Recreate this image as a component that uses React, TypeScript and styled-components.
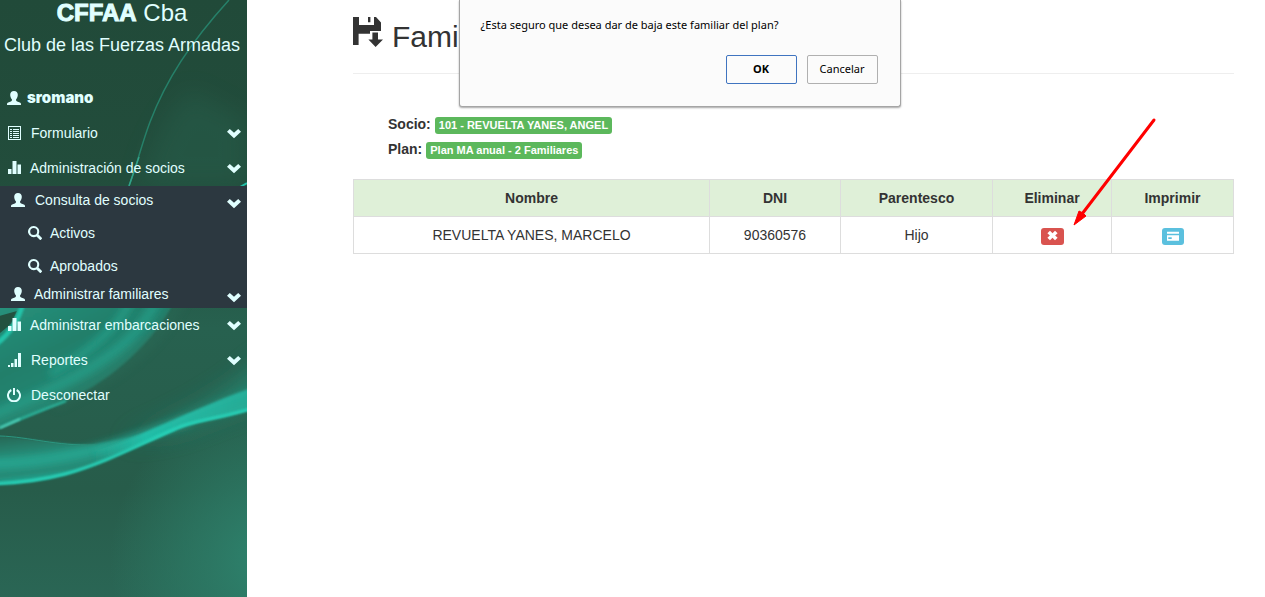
import React from "react";
import styled, { createGlobalStyle } from "styled-components";

const GlobalStyle = createGlobalStyle`
  *, *::before, *::after { box-sizing: border-box; }
  body {
    margin: 0;
    background: #fff;
    color: #333;
    font: 15px/20px "Liberation Sans", Arial, sans-serif;
  }
  h1, h2, p, ul, dl, dd { margin: 0; padding: 0; }
  ul { list-style: none; }
`;

const Page = styled.div`
  position: relative;
  display: flex;
  min-height: 100vh;
  overflow: hidden;
`;

const Sidebar = styled.aside`
  position: relative;
  flex: none;
  width: 247px;
  background: #275f4e;
  color: #e0ffff;
`;

const Backdrop = styled.svg`
  position: absolute;
  inset: 0;
  width: 100%;
  height: 100%;
`;

const SidebarContent = styled.div`
  position: relative;
`;

const Brand = styled.header`
  height: 80px;
  padding-right: 3px;
  text-align: center;
  white-space: nowrap;
`;

const BrandName = styled.h1`
  font-size: 24px;
  line-height: 26px;
  font-weight: 400;

  strong { font-weight: 700; -webkit-text-stroke: 1px currentColor; }
`;

const BrandTag = styled.p`
  padding-top: 6px;
  font-size: 18px;
  line-height: 26px;
`;

const MenuLink = styled.a<{ $height?: number; $indent?: number; $gap?: number; $bold?: boolean }>`
  display: flex;
  align-items: center;
  gap: ${(p) => p.$gap ?? 9}px;
  height: ${(p) => p.$height ?? 35}px;
  padding: 0 6px 0 ${(p) => p.$indent ?? 7}px;
  color: inherit;
  font-family: ${(p) => (p.$bold ? '"Inter", "Arial Black", sans-serif' : "inherit")};
  font-size: ${(p) => (p.$bold ? 15 : 14)}px;
  font-weight: ${(p) => (p.$bold ? 900 : 400)};
  text-decoration: none;
  white-space: nowrap;
`;

const Label = styled.span`
  flex: 1;
`;

const Submenu = styled.ul`
  margin: 1px 0 -1px;
  padding-bottom: 2px;
  background: #2c3840;
`;

const Leaves = styled.ul`
  padding-top: 2px;
`;

const Glyph = styled.svg<{ $size?: number; $drop?: boolean }>`
  flex: none;
  display: block;
  width: ${(p) => p.$size ?? 14}px;
  height: ${(p) => p.$size ?? 14}px;
  margin-top: ${(p) => (p.$drop ? 6 : 0)}px;
  fill: currentColor;
`;

const Main = styled.main`
  position: relative;
  flex: 1;
  min-width: 0;
  padding: 15px 31px 40px 106px;
`;

const TitleBar = styled.header`
  display: flex;
  align-items: flex-start;
  gap: 9px;
  height: 59px;
  padding-top: 2px;
  border-bottom: 1px solid #eee;
`;

const Title = styled.h2`
  font-size: 30px;
  line-height: 34px;
  font-weight: 400;
  padding-top: 3px;
`;

const Summary = styled.dl`
  padding: 37px 0 0 35px;
  margin-bottom: 18px;
`;

const SummaryRow = styled.div`
  display: flex;
  align-items: center;
  gap: 4px;
  height: 25px;

  dt { font-size: 14px; font-weight: 700; }
`;

const Badge = styled.dd`
  && { margin-top: 4px; }
  padding: 0 4px;
  border-radius: 3px;
  background: #5cb85c;
  color: #fff;
  font-size: 11px;
  line-height: 17px;
  font-weight: 700;
`;

const Table = styled.table`
  width: 100%;
  table-layout: fixed;
  border-collapse: collapse;
  font-size: 14px;
  text-align: center;

  th, td {
    height: 37px;
    padding: 0 8px;
    border: 1px solid #ddd;
  }
  th { background: #dff0d8; font-weight: 700; }
`;

const Col = styled.col<{ $width?: number }>`
  width: ${(p) => (p.$width ? `${p.$width}px` : "auto")};
`;

const IconButton = styled.button<{ $tone: "danger" | "info" }>`
  display: flex;
  align-items: center;
  justify-content: center;
  margin: 2px auto 0;
  padding: 0 0 1px;
  width: ${(p) => (p.$tone === "danger" ? 23 : 22)}px;
  height: 17px;
  border: 0;
  border-radius: 3px;
  background: ${(p) => (p.$tone === "danger" ? "#d9534f" : "#5bc0de")};
  color: #fff;
`;

const Arrow = styled.svg`
  position: absolute;
  top: 116px;
  right: 107px;
  width: 86px;
  height: 112px;
  pointer-events: none;
`;

const Dialog = styled.div`
  position: absolute;
  top: 0;
  left: calc(50% - 174px);
  width: 442px;
  height: 107px;
  padding: 16px 22px 0 21px;
  border: 1px solid #a5a5a5;
  border-top: 0;
  border-radius: 0 0 3px 3px;
  background: #fbfbfb;
  box-shadow: 0 1px 2px rgba(0, 0, 0, 0.35);
  color: #000;
  font-family: "Noto Sans", "Segoe UI", sans-serif;
  font-size: 11px;
  line-height: 18px;
  white-space: nowrap;
`;

const DialogActions = styled.div`
  display: flex;
  justify-content: flex-end;
  gap: 10px;
  margin-top: 21px;
`;

const DialogButton = styled.button<{ $primary?: boolean }>`
  width: 71px;
  height: 29px;
  padding: 0 0 2px;
  border: 1px solid ${(p) => (p.$primary ? "#3f74c0" : "#b0b0b0")};
  border-radius: 2px;
  background: #fbfbfb;
  color: #000;
  font: inherit;
  font-weight: ${(p) => (p.$primary ? 700 : 400)};
`;

type GlyphName = "user" | "list" | "stats" | "search" | "signal" | "off" | "chevron" | "remove" | "card" | "floppy";

const glyphs: Record<GlyphName, React.ReactNode> = {
  user: (
    <path d="M7 0C4.600 0 3.200 1.500 3.200 3.800C3.200 5.700 3.900 7.300 4.900 8.300V9.300C4.900 9.800 4.500 10.100 3.800 10.400L1.200 11.500C.4 11.800 0 12.300 0 13V14H14V13C14 12.300 13.600 11.800 12.800 11.500L10.200 10.400C9.500 10.100 9.100 9.800 9.100 9.300V8.300C10.100 7.300 10.800 5.700 10.800 3.800C10.800 1.500 9.400 0 7 0Z" />
  ),
  list: (
    <path
      fillRule="evenodd"
      d="M1 0H14V14H1ZM2 1V13H13V1ZM3 3H5V4H3ZM6 3H12V4H6ZM3 5H5V6H3ZM6 5H12V6H6ZM3 7H5V8H3ZM6 7H12V8H6ZM3 9H5V10H3ZM6 9H12V10H6ZM3 11H5V12H3ZM6 11H12V12H6Z"
    />
  ),
  stats: <path d="M1 8H4.500V13H1ZM5.500 0H9.500V13H5.500ZM10.500 3.500H14V13H10.500Z" />,
  search: (
    <path
      fillRule="evenodd"
      d="M5.700 0A5.600 5.600 0 0 1 10.500 8.400L13.800 11.700A.8.800 0 0 1 13.800 12.800L12.900 13.700A.7.700 0 0 1 11.800 13.700L8.500 10.400A5.600 5.600 0 1 1 5.700 0ZM5.700 2.100A3.500 3.500 0 1 0 5.700 9.100A3.500 3.500 0 0 0 5.700 2.100Z"
    />
  ),
  signal: <path d="M1 12H3V14H1ZM4 10H6.500V14H4ZM7.500 6H10V14H7.500ZM11 0H14V14H11Z" />,
  off: (
    <g fill="none" stroke="currentColor" strokeWidth="2">
      <path d="M4.300 2A6 6 0 1 0 9.700 2" />
      <path d="M7 0V7" />
    </g>
  ),
  chevron: <path d="M2.800 3L7 6.800L11.200 3L14 5.700L7 12.300L0 5.700Z" />,
  remove: <path d="M3.800 1L7 4L10.200 1L13.500 4.100L10.400 7L13.500 9.900L10.200 13L7 10L3.800 13L.5 9.900L3.600 7L.5 4.100Z" />,
  card: (
    <path fillRule="evenodd" d="M0 2H14V4.300H0ZM0 6H14V12.500H0ZM1.500 8.500V10.500H5.500V8.500Z" />
  ),
  floppy: (
    <path
      fillRule="evenodd"
      d="M0 0H3V4H10.500V0H11.500L14 2.700V7H8.500V8.400H2.800V14H0ZM7.500 0H8.700V2.600H7.500ZM9.700 7.800H12.500V11.200H15L11.300 15L7.700 11.200H9.700Z"
    />
  ),
};

function Icon({ name, size, drop, box = 14 }: { name: GlyphName; size?: number; drop?: boolean; box?: number }) {
  return (
    <Glyph viewBox={`0 0 ${box} ${box}`} $size={size} $drop={drop} aria-hidden="true">
      {glyphs[name]}
    </Glyph>
  );
}

function Waves() {
  return (
    <Backdrop viewBox="0 0 247 597" preserveAspectRatio="none" aria-hidden="true">
      <defs>
        <linearGradient id="base" x1="0" y1="0" x2="0" y2="597" gradientUnits="userSpaceOnUse">
          <stop offset="0" stopColor="#214a39" />
          <stop offset="0.300" stopColor="#224d3c" />
          <stop offset="0.550" stopColor="#27614f" />
          <stop offset="0.820" stopColor="#275c4a" />
          <stop offset="1" stopColor="#2a6655" />
        </linearGradient>
        <radialGradient id="side" cx="275" cy="560" r="165" gradientUnits="userSpaceOnUse">
          <stop offset="0" stopColor="#2e8670" />
          <stop offset="0.400" stopColor="#2d7d68" stopOpacity="0.750" />
          <stop offset="1" stopColor="#2c8069" stopOpacity="0" />
        </radialGradient>
        <linearGradient id="sweep" x1="0" y1="300" x2="60" y2="420" gradientUnits="userSpaceOnUse">
          <stop offset="0" stopColor="#26937d" />
          <stop offset="0.500" stopColor="#237f6b" />
          <stop offset="1" stopColor="#278a75" />
        </linearGradient>
        <linearGradient id="lower" x1="20" y1="436" x2="26" y2="486" gradientUnits="userSpaceOnUse">
          <stop offset="0" stopColor="#286b59" />
          <stop offset="0.450" stopColor="#26937e" />
          <stop offset="0.750" stopColor="#258a76" />
          <stop offset="1" stopColor="#23b59f" />
        </linearGradient>
        <linearGradient id="band" x1="90" y1="0" x2="247" y2="0" gradientUnits="userSpaceOnUse">
          <stop offset="0" stopColor="#25b8a2" stopOpacity="0" />
          <stop offset="0.350" stopColor="#24bda7" />
          <stop offset="1" stopColor="#27ab96" />
        </linearGradient>
        <filter id="soft1" x="-20%" y="-20%" width="140%" height="140%"><feGaussianBlur stdDeviation="1" /></filter>
        <filter id="soft4" x="-30%" y="-30%" width="160%" height="160%"><feGaussianBlur stdDeviation="4" /></filter>
        <filter id="soft12" x="-50%" y="-50%" width="200%" height="200%"><feGaussianBlur stdDeviation="12" /></filter>
      </defs>
      <rect width="247" height="597" fill="url(#base)" />
      <rect y="390" width="247" height="207" fill="url(#side)" />
      <path d="M190 90C160 120 150 150 140 186H247V120Z" fill="#2a6a56" opacity="0.300" filter="url(#soft12)" />
      <path d="M229 0C190 43 166 80 150 122C141 146 137 165 129 186" fill="none" stroke="#268069" strokeWidth="1.500" />
      <path d="M139 157L129 186" stroke="#33a189" strokeWidth="1.500" />
      <path d="M240 187L247 183" stroke="#23bfa8" strokeWidth="2" />
      <path d="M-10 290H181L171 308C147 350 105 384 60 404L-10 432Z" fill="url(#sweep)" filter="url(#soft1)" />
      <path d="M160 295C135 345 98 372 -10 416" fill="none" stroke="#27a993" strokeWidth="8" opacity="0.700" filter="url(#soft4)" />
      <path d="M135 295C118 328 90 352 50 374" fill="none" stroke="#25b9a2" strokeWidth="4" opacity="0.900" filter="url(#soft4)" />
      <path d="M182 295C158 345 120 374 54 404" fill="none" stroke="#2a6c59" strokeWidth="12" opacity="0.400" filter="url(#soft4)" />
      <path d="M-5 317L17 311L11 324L-5 337Z" fill="#23513f" />
      <path d="M24 300C18 322 10 334 -6 346" fill="none" stroke="#22c3a9" strokeWidth="5" filter="url(#soft1)" />
      <path d="M-6 430C20 419 42 410 66 401" fill="none" stroke="#2cb79f" strokeWidth="2" filter="url(#soft1)" />
      <path d="M0 428L20 419" stroke="#5ad6c0" strokeWidth="1.500" filter="url(#soft1)" />
      <path d="M270 355C226 395 179 420 120 442L180 430L270 395Z" fill="#278570" opacity="0.900" filter="url(#soft12)" />
      <path d="M-10 436C30 437 70 447 95 444C130 438 150 432 178 424C194 421 194 421 175 430C140 445 105 464 65 475C40 481 20 484 -10 484Z" fill="url(#lower)" filter="url(#soft1)" />
      <path d="M-10 464C60 464 110 446 190 420" fill="none" stroke="#25b7a1" strokeWidth="7" opacity="0.700" filter="url(#soft4)" />
      <path d="M60 461C130 445 180 412 257 386V407C215 421 194 421 175 430C150 440 130 450 90 464Z" fill="url(#band)" filter="url(#soft1)" />
      <path d="M95 450C140 438 175 415 257 388" fill="none" stroke="#24ccb4" strokeWidth="2" opacity="0.500" filter="url(#soft4)" />
      <path d="M0 436C30 437 55 446 95 445" fill="none" stroke="#2b9680" strokeWidth="1" />
      <path d="M-10 484C20 483 42 480 65 474C105 463 140 444 175 429C194 420 215 420 257 407" fill="none" stroke="#28d2b8" strokeWidth="3" filter="url(#soft1)" />
    </Backdrop>
  );
}

function MenuItem(props: {
  icon: GlyphName;
  label: string;
  height?: number;
  indent?: number;
  gap?: number;
  bold?: boolean;
  caret?: boolean;
  dropCaret?: boolean;
}) {
  return (
    <MenuLink href="#" $height={props.height} $indent={props.indent} $gap={props.gap} $bold={props.bold}>
      <Icon name={props.icon} />
      <Label>{props.label}</Label>
      {props.caret && <Icon name="chevron" drop={props.dropCaret} />}
    </MenuLink>
  );
}

export default function App() {
  return (
    <Page>
      <GlobalStyle />
      <Sidebar>
        <Waves />
        <SidebarContent>
          <Brand>
            <BrandName><strong>CFFAA</strong> Cba</BrandName>
            <BrandTag>Club de las Fuerzas Armadas</BrandTag>
          </Brand>
          <nav>
            <ul>
              <li><MenuItem icon="user" label="sromano" gap={6} bold /></li>
              <li><MenuItem icon="list" label="Formulario" gap={10} caret /></li>
              <li>
                <MenuItem icon="stats" label="Administración de socios" caret />
                <Submenu>
                  <li>
                    <MenuItem icon="user" label="Consulta de socios" height={28} indent={11} gap={10} caret dropCaret />
                    <Leaves>
                      <li><MenuItem icon="search" label="Activos" height={33} indent={28} gap={8} /></li>
                      <li><MenuItem icon="search" label="Aprobados" height={33} indent={28} gap={8} /></li>
                    </Leaves>
                  </li>
                  <li><MenuItem icon="user" label="Administrar familiares" height={24} indent={11} caret dropCaret /></li>
                </Submenu>
              </li>
              <li><MenuItem icon="stats" label="Administrar embarcaciones" caret /></li>
              <li><MenuItem icon="signal" label="Reportes" gap={10} caret /></li>
              <li><MenuItem icon="off" label="Desconectar" gap={10} /></li>
            </ul>
          </nav>
        </SidebarContent>
      </Sidebar>
      <Main>
        <TitleBar>
          <Icon name="floppy" size={30} box={15} />
          <Title>Fami</Title>
        </TitleBar>
        <Summary>
          <SummaryRow><dt>Socio:</dt><Badge>101 - REVUELTA YANES, ANGEL</Badge></SummaryRow>
          <SummaryRow><dt>Plan:</dt><Badge>Plan MA anual - 2 Familiares</Badge></SummaryRow>
        </Summary>
        <Table>
          <colgroup>
            <Col />
            <Col $width={131} />
            <Col $width={152} />
            <Col $width={119} />
            <Col $width={122} />
          </colgroup>
          <thead>
            <tr><th>Nombre</th><th>DNI</th><th>Parentesco</th><th>Eliminar</th><th>Imprimir</th></tr>
          </thead>
          <tbody>
            <tr>
              <td>REVUELTA YANES, MARCELO</td>
              <td>90360576</td>
              <td>Hijo</td>
              <td><IconButton type="button" $tone="danger" aria-label="Eliminar"><Icon name="remove" size={11} /></IconButton></td>
              <td><IconButton type="button" $tone="info" aria-label="Imprimir"><Icon name="card" size={12} /></IconButton></td>
            </tr>
          </tbody>
        </Table>
        <Arrow viewBox="0 0 86 112" aria-hidden="true">
          <path d="M82 4L10 98" stroke="#f00" strokeWidth="3" strokeLinecap="round" />
          <path d="M2 109L7 95L11 97L14 100Z" fill="#f00" stroke="#f00" />
        </Arrow>
      </Main>
      <Dialog role="dialog" aria-label="Confirmar baja">
        <p>¿Esta seguro que desea dar de baja este familiar del plan?</p>
        <DialogActions>
          <DialogButton type="button" $primary>OK</DialogButton>
          <DialogButton type="button">Cancelar</DialogButton>
        </DialogActions>
      </Dialog>
    </Page>
  );
}
